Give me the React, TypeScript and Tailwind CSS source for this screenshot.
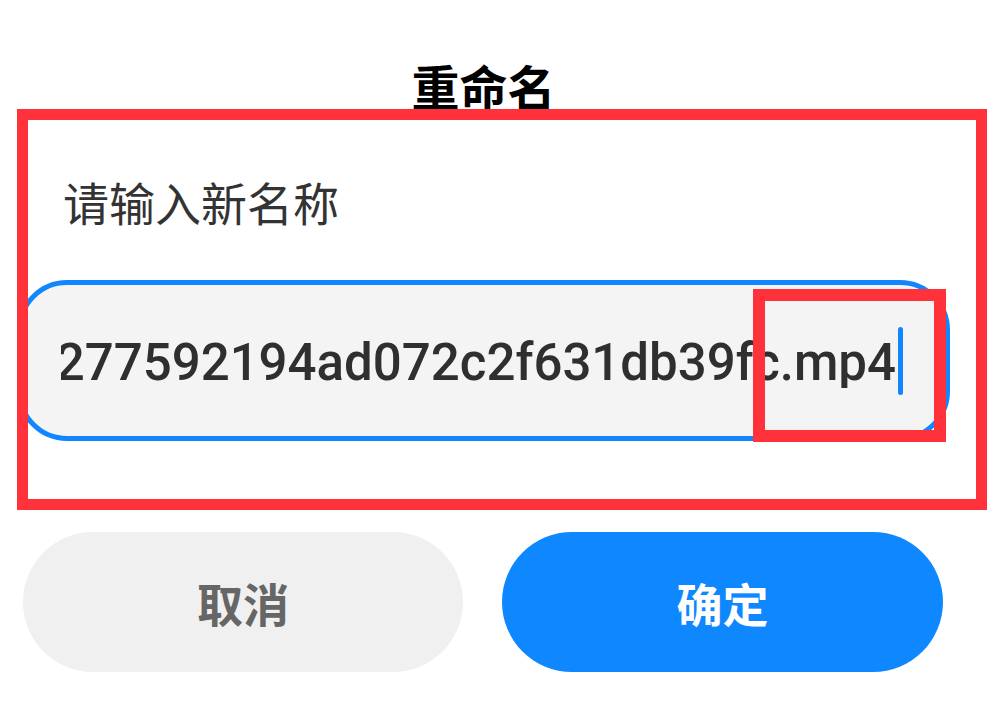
import React from "react";

const RenameDialog = () => {
  return (
    <div className="relative h-[721px] w-[987px] overflow-hidden bg-white font-['Noto_Sans_CJK_SC',sans-serif]">
      <div className="ml-[17px] flex w-[933px] flex-col">
        <h1 className="mt-[61px] text-center text-[48px] font-bold leading-none text-black">
          重命名
        </h1>
        <p className="ml-[46px] mt-[69px] text-[46px] leading-none text-[#333333]">
          请输入新名称
        </p>
        <div className="mt-[56px] flex h-[161px] items-center rounded-[50px] border-[5px] border-[#1087ff] bg-[#f4f4f4] pl-[39px] pr-[42px]">
          <div className="flex min-w-0 flex-1 items-center justify-end overflow-hidden whitespace-nowrap pt-[3px]">
            <span className="font-['Roboto','Noto_Sans_CJK_SC',sans-serif] text-[51px] font-medium leading-none text-[#2f2f2f]">
              277592194ad072c2f631db39fc.mp4
            </span>
          </div>
          <span className="ml-[2px] h-[68px] w-[5px] shrink-0 rounded-full bg-[#1087ff]" />
        </div>
        <div className="ml-[6px] mt-[91px] flex gap-[39px]">
          <button className="flex h-[140px] w-[440px] items-center justify-center rounded-full bg-[#f0f0f0] text-[46px] font-bold text-[#666666]">
            取消
          </button>
          <button className="flex h-[140px] w-[441px] items-center justify-center rounded-full bg-[#0f88ff] text-[46px] font-bold text-white">
            确定
          </button>
        </div>
      </div>

      {/* annotation boxes */}
      <div className="pointer-events-none absolute left-[17px] top-[109px] h-[401px] w-[970px] border-[11px] border-[#ff323b]" />
      <div className="pointer-events-none absolute left-[753px] top-[289px] h-[153px] w-[193px] border-[12px] border-[#ff323b]" />
    </div>
  );
};

export default function App() {
  return <RenameDialog />;
}
